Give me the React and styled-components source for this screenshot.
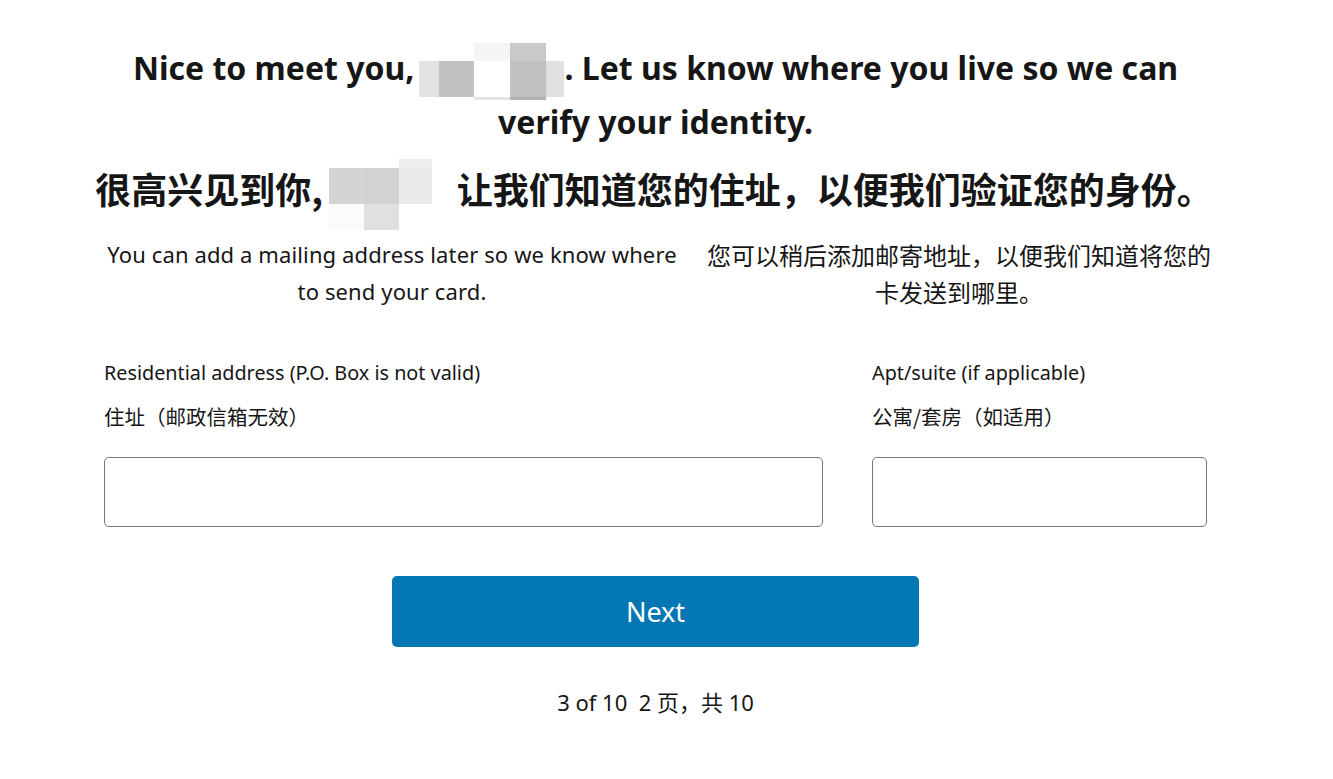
import styled, { createGlobalStyle } from "styled-components";

const GlobalStyle = createGlobalStyle`
  body {
    margin: 0;
    background: #ffffff;
    color: #161616;
    font-family: "Noto Sans", "Noto Sans CJK SC", sans-serif;
  }
`;

const Page = styled.main`
  width: 1103px;
  margin-left: 104px;
  padding-top: 41px;
  padding-bottom: 40px;
`;

const Title = styled.h1`
  margin: 0;
  font-size: 32px;
  font-weight: 700;
  line-height: 54px;
  text-align: center;
`;

const TitleZh = styled.h2`
  margin: 14px -20px 0 -23px;
  font-family: "Noto Sans CJK SC", sans-serif;
  font-size: 36px;
  font-weight: 700;
  line-height: 50px;
  text-align: center;
  white-space: nowrap;
`;

const Mosaic = styled.span`
  display: inline-grid;
  grid-template-columns: ${(p) => p.$cols};
  grid-template-rows: ${(p) => p.$rows};
  vertical-align: middle;
  margin: ${(p) => p.$margin};
`;

const Cell = styled.span`
  background: ${(p) => p.$c || "transparent"};
`;

const SubRow = styled.div`
  display: flex;
  margin-top: 23px;
  margin-left: -4px;
`;

const Sub = styled.p`
  flex-shrink: 0;
  margin: 0;
  width: 584px;
  font-size: 22px;
  letter-spacing: 0.12px;
  line-height: 37px;
  text-align: center;
`;

const SubZh = styled(Sub)`
  width: 516px;
  margin-left: 17px;
  font-family: "Noto Sans CJK SC", sans-serif;
  font-size: 24px;
  letter-spacing: 0;
`;

const Fields = styled.div`
  display: grid;
  grid-template-columns: 719px 335px;
  column-gap: 49px;
  margin-top: 50px;
`;

const Field = styled.label`
  display: flex;
  flex-direction: column;
`;

const Label = styled.span`
  font-size: 19.8px;
  line-height: 26px;
`;

const LabelZh = styled.span`
  margin-top: 17px;
  font-family: "Noto Sans CJK SC", sans-serif;
  font-size: 20.5px;
  line-height: 26px;
`;

const Input = styled.input`
  box-sizing: border-box;
  margin-top: 28px;
  height: 70px;
  width: 100%;
  border: 1px solid #767676;
  border-radius: 5px;
  padding: 0 14px;
  font: inherit;
  font-size: 18px;
  outline: none;
`;

const NextButton = styled.button`
  display: block;
  width: 527px;
  height: 71px;
  margin: 49px auto 0;
  border: 0;
  border-radius: 5px;
  background: #0377b3;
  color: #ffffff;
  font-family: "Noto Sans", sans-serif;
  font-size: 27px;
  cursor: pointer;
`;

const Progress = styled.p`
  margin: 41px 0 0;
  font-size: 22px;
  line-height: 28px;
  text-align: center;
  white-space: pre;
`;

const nameMosaic = [
  [null, null, "#f5f5f5", "#c9c9cb", null],
  ["#e2e3e3", "#c2c1bf", "#ffffff", "#c0c0c0", "#e1e1e1"],
  [null, null, "#e3e3e3", "#b2b2b2", null],
];

const nameMosaicZh = [
  [null, null, "#eeeeee"],
  ["#d4d4d4", "#d2d2d0", "#e9e9e9"],
  ["#fbfbfa", "#dfe0df", null],
];

const Blur = ({ grid, cols, rows, margin }) => (
  <Mosaic $cols={cols} $rows={rows} $margin={margin} aria-hidden="true">
    {grid.flat().map((c, i) => (
      <Cell key={i} $c={c} />
    ))}
  </Mosaic>
);

export default function App() {
  return (
    <>
      <GlobalStyle />
      <Page>
        <Title>
          Nice to meet you,
          <Blur grid={nameMosaic} cols="20px 35px 36px 36px 18px" rows="18px 36px 3px" margin="-12px 0 -12px 5px" />
          . Let us know where you live so we can
          <br />
          verify your identity.
        </Title>
        <TitleZh>
          很高兴见到你,
          <Blur grid={nameMosaicZh} cols="35px 35px 33px" rows="9px 36px 26px" margin="-20px 25px -20px 6px" />
          让我们知道您的住址，以便我们验证您的身份。
        </TitleZh>
        <SubRow>
          <Sub>You can add a mailing address later so we know where to send your card.</Sub>
          <SubZh>您可以稍后添加邮寄地址，以便我们知道将您的卡发送到哪里。</SubZh>
        </SubRow>
        <Fields>
          <Field>
            <Label>Residential address (P.O. Box is not valid)</Label>
            <LabelZh>住址（邮政信箱无效）</LabelZh>
            <Input type="text" />
          </Field>
          <Field>
            <Label>Apt/suite (if applicable)</Label>
            <LabelZh>公寓/套房（如适用）</LabelZh>
            <Input type="text" />
          </Field>
        </Fields>
        <NextButton type="button">Next</NextButton>
        <Progress>3 of 10  2 页，共 10</Progress>
      </Page>
    </>
  );
}
